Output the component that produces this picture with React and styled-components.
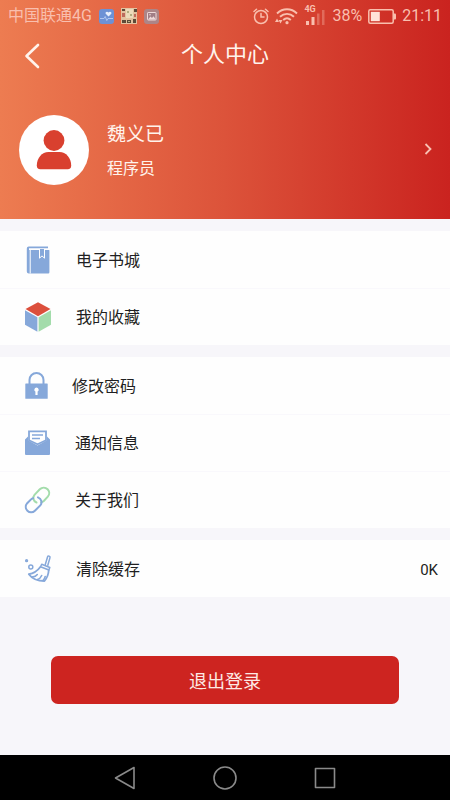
import React from "react";
import styled, { createGlobalStyle } from "styled-components";

const GlobalStyle = createGlobalStyle`
  *, *::before, *::after { box-sizing: border-box; }
  body {
    margin: 0;
    background: #f7f6fa;
    font-family: Roboto, "Noto Sans CJK SC", sans-serif;
    color: #1f1f22;
  }
  button { font: inherit; color: inherit; border: 0; background: none; padding: 0; cursor: pointer; }
  svg { display: block; flex: none; }
`;

const Page = styled.div`
  min-height: 100vh;
  display: flex;
  flex-direction: column;
`;

const Hero = styled.header`
  background: linear-gradient(90deg, #ed7c51 0%, #dc533a 50%, #ca231f 100%);
  color: #fff3ec;
  padding-bottom: 37px;
  display: flex;
  flex-direction: column;
`;

const StatusBar = styled.div`
  height: 32px;
  padding: 0 8px;
  display: flex;
  align-items: center;
  justify-content: space-between;
  font-size: 16px;
  line-height: 24px;
  color: #f9bfae;
`;

const StatusGroup = styled.div`
  display: flex;
  align-items: center;
  gap: ${(p) => p.$gap}px;
`;

const TitleBar = styled.div`
  height: 48px;
  padding: 0 20px;
  display: grid;
  grid-template-columns: 24px 1fr 24px;
  align-items: center;
`;

const Title = styled.h1`
  margin: 0;
  font-size: 22px;
  line-height: 32px;
  padding-bottom: 2px;
  font-weight: 400;
  text-align: center;
`;

const BackButton = styled.button`
  display: grid;
  place-items: center;
  height: 32px;
`;

const Profile = styled.button`
  display: flex;
  align-items: center;
  gap: 18px;
  margin-top: 35px;
  padding: 0 18px 0 19px;
  text-align: left;
`;

const Avatar = styled.span`
  width: 70px;
  height: 70px;
  margin-bottom: -3px;
  border-radius: 50%;
  background: #fff;
  display: grid;
  place-items: center;
`;

const ProfileText = styled.span`
  flex: 1;
  display: flex;
  flex-direction: column;
  gap: 8px;
  padding-top: 4px;
`;

const Name = styled.span`
  font-size: 19px;
  line-height: 28px;
`;

const Job = styled.span`
  font-size: 16px;
  line-height: 24px;
`;

const Main = styled.main`
  flex: 1;
  display: flex;
  flex-direction: column;
  gap: 12px;
  padding: 12px 0 48px;
`;

const MenuGroup = styled.section`
  background: #fefefe;
`;

const MenuRow = styled.button`
  width: 100%;
  height: 57px;
  padding: 0 12px 0 24px;
  display: flex;
  align-items: center;
  gap: 24px;
  font-size: 16px;
  line-height: 24px;
  text-align: left;

  & + & { border-top: 1px solid #f9f8fc; }
`;

const RowLabel = styled.span`
  flex: 1;
  padding-top: 2px;
`;

const RowValue = styled.span`
  font-size: 15px;
  padding-top: 2px;
`;

const LogoutButton = styled.button`
  margin: 47px 51px 0;
  height: 48px;
  padding-top: 3px;
  border-radius: 7px;
  background: #cd2420;
  color: #fde9e4;
  font-size: 18px;
  line-height: 24px;
`;

const NavBar = styled.nav`
  height: 45px;
  background: #000;
  display: flex;
  justify-content: center;
  gap: 76px;
`;

const NavButton = styled.button`
  width: 24px;
  display: grid;
  place-items: center;
`;

const BLUE = "#86a8da";
const GREEN = "#a3dcab";

const BookIcon = () => (
  <svg width="28" height="30" viewBox="0 0 28 30" aria-hidden="true">
    <path d="M4.800 1.500H24v1.800H5v1.600h20a.4.4 0 0 1 .4.4v22a1.200 1.200 0 0 1-1.200 1.200H4.800A2 2 0 0 1 2.800 26.500V3.500a2 2 0 0 1 2-2z" fill={BLUE} />
    <path d="M5.700 5h1v23.500h-1z" fill="#fff" />
    <path d="M15.500 4v9.200l2.500-2.300 2.500 2.300V4" fill={BLUE} stroke="#fff" strokeWidth="1" />
  </svg>
);

const CubeIcon = () => (
  <svg width="28" height="30" viewBox="0 0 28 30" aria-hidden="true">
    <path d="M14 .3 26.500 7 14 14.200 1.500 7z" fill="#dc4f3c" />
    <path d="M1 8.200 13.400 15.300v14.400L1 22.800z" fill={BLUE} />
    <path d="M27 8.200 14.600 15.300v14.400L27 22.800z" fill={GREEN} />
  </svg>
);

const LockIcon = () => (
  <svg width="24" height="30" viewBox="0 0 24 30" aria-hidden="true">
    <path d="M5.500 13V9a7 7 0 0 1 14 0v4" fill="none" stroke={BLUE} strokeWidth="2" />
    <rect x="1.300" y="12.500" width="22.400" height="15.300" rx=".6" fill={BLUE} />
    <path d="M12.500 16.500a2.200 2.200 0 0 1 1.100 4.100v3.400h-2.200v-3.400a2.200 2.200 0 0 1 1.100-4.100z" fill="#fff" />
  </svg>
);

const MailIcon = () => (
  <svg width="27" height="30" viewBox="0 0 27 30" aria-hidden="true">
    <path d="M1 11.500 4 8.500v3.800l9.500 5.200L23 12.300V8.500l3 3V26a1 1 0 0 1-1 1H2a1 1 0 0 1-1-1z" fill={BLUE} />
    <path d="M5 3.300h17v9l-8.500 4L5 12.300z" fill="#fff" stroke={BLUE} strokeWidth="1.800" />
    <path d="M8 7h11M8 10.500h8" stroke={BLUE} strokeWidth="1.600" />
  </svg>
);

const LinkIcon = () => (
  <svg width="27" height="30" viewBox="0 0 27 30" fill="none" strokeWidth="2" strokeLinecap="round" aria-hidden="true">
    <path d="M12.500 17.500C9 16 8.300 12.500 10.500 9.800l5.300-5.500c2.400-2.400 5.800-2 7.800 0s2.200 5.100.2 7.400l-4 4.300c-.8.800-1.700 1.200-2.700 1.200" stroke={GREEN} />
    <path d="M14 12.400c3.600 1.500 4.600 5.300 2.300 8l-5.400 5.300c-2.200 2.200-5.500 2-7.500 0s-2.200-5.100-.2-7.500L7 14.400c.7-.8 1.500-1.100 2.300-1.200" stroke={BLUE} />
  </svg>
);

const BroomIcon = () => (
  <svg width="28" height="30" viewBox="0 0 28 30" fill="none" stroke={BLUE} strokeWidth="1.500" strokeLinecap="round" strokeLinejoin="round" aria-hidden="true">
    <path d="m21.300 10.500 2.300-7.700c.4-1.300 2.800-.7 2.400.8l-2.200 7.700" />
    <path d="M17.700 10.300 25.800 13.500l-.9 2.500-8.400-3.200z" />
    <path d="M16.300 13C13 17.500 9.500 19.500 4.800 20.200 8 24.500 13 27 20.500 27c2.500-3 4-6.500 4.200-10.700" strokeWidth="1.800" />
    <path d="M8.500 22.800c2 .2 3.500-.7 4.800-2.300M13.500 25.500c2-.5 3.200-1.800 4.200-4M19 26.500c1.200-1 1.800-2.200 2.200-4" strokeWidth="1.600" />
    <circle cx="6.800" cy="13" r="2" />
    <circle cx="2.600" cy="6.700" r=".9" />
  </svg>
);

const PersonIcon = () => (
  <svg width="36" height="40" viewBox="0 0 36 40" fill="#d9402f" aria-hidden="true">
    <circle cx="18" cy="10.500" r="10.400" />
    <path d="M.8 35.500C.8 28 6 22 12.500 21.900h11C30 22 35.200 28 35.200 35.500c0 2.500-1.200 3.700-3.500 3.700H4.300C2 39.200.8 38 .8 35.500z" />
  </svg>
);

const HealthBadge = () => (
  <svg width="15" height="15" viewBox="0 0 15 15" aria-hidden="true">
    <rect width="15" height="15" rx="3" fill="#6d91d5" />
    <path d="M9.500 7.500 6.700 4.800c-1-1.600 1.400-3.100 2.800-1.400 1.400-1.700 3.800-.2 2.800 1.400z" fill="#e9effc" />
    <path d="M1 9.500h4l1.200-2 1.600 4 1.200-2h5" fill="none" stroke="#b7cbf3" strokeWidth=".9" />
  </svg>
);

const GameBadge = () => (
  <svg width="16" height="16" viewBox="0 0 16 16" aria-hidden="true">
    <rect width="16" height="16" fill="#e3c3a0" />
    <path d="M1 1h3v2H1zM13 1h3v3h-3zM1 12h4v3H1zM6 12h4v3H6zM12 11h3v4h-3z" fill="#5d4a38" />
    <path d="M1 5h3v4H1zM13 6h2v3h-2z" fill="#bd6b5c" />
    <path d="M5 1h7v9H5z" fill="#ecdcbc" />
    <path d="M6 3h2v2H6zM9 6h2v2H9zM7 13h2v1H7z" fill="#b3ad80" />
  </svg>
);

const PhotoBadge = () => (
  <svg width="15" height="15" viewBox="0 0 15 15" aria-hidden="true">
    <rect width="15" height="15" rx="3" fill="#ad8587" />
    <rect x="3.500" y="3.500" width="8.500" height="7.500" rx=".6" fill="#a17e86" stroke="#efd9d9" />
    <path d="m4 10.500 2.500-3 1.500 1.500 1.500-1.700 2.300 3.200z" fill="#efd9d9" />
    <circle cx="6" cy="5.800" r=".8" fill="#efd9d9" />
  </svg>
);

const AlarmIcon = () => (
  <svg width="16" height="17" viewBox="0 0 16 17" fill="none" stroke="currentColor" strokeWidth="1.500" strokeLinecap="round" aria-hidden="true">
    <circle cx="8" cy="9" r="6.500" />
    <path d="M8 5.500V9h3M1 3.500 3.500 1.300M15 3.500 12.500 1.300" />
  </svg>
);

const WifiIcon = () => (
  <svg width="23" height="18" viewBox="0 0 23 18" fill="none" stroke="currentColor" aria-hidden="true">
    <path d="M2 6.500c5.800-5.600 14.200-5.600 20 0M5 9.800c4.100-3.900 9.900-3.900 14 0M8.200 13c2.300-2.200 5.300-2.200 7.600 0" strokeWidth="1.900" />
    <circle cx="12" cy="15.700" r="1.600" fill="currentColor" stroke="none" />
    <path d="M0 15 2 11.500 4 15zM3.500 13 5.500 16.500 7.500 13z" fill="currentColor" stroke="none" />
  </svg>
);

const SignalBox = styled.span`
  display: flex;
  flex-direction: column;
  width: 22px;
  height: 22px;
  font-size: 9px;
  line-height: 8px;
  font-weight: 700;
  position: relative;
`;

const SignalBars = styled.svg`
  position: absolute;
  left: 2px;
  bottom: 2px;
`;

const Signal = () => (
  <SignalBox>
    4G
    <SignalBars width="20" height="16" viewBox="0 0 20 16" fill="currentColor" aria-hidden="true">
      <path d="M0 12h3v4H0zM5.500 8h3v8h-3z" />
      <path d="M11 4.500h2.500V16H11zM16 1h2.500v15H16z" opacity=".35" />
    </SignalBars>
  </SignalBox>
);

const BatteryIcon = () => (
  <svg width="28" height="15" viewBox="0 0 28 15" aria-hidden="true">
    <rect x=".8" y=".8" width="24.400" height="13.400" rx="1.500" fill="none" stroke="currentColor" strokeWidth="1.500" />
    <path d="M25.500 4.500H27a1 1 0 0 1 1 1v4a1 1 0 0 1-1 1h-1.500z" fill="currentColor" />
    <rect x="2.800" y="2.800" width="9" height="9.400" fill="#ffe3d9" />
  </svg>
);

const groups = [
  [
    { label: "电子书城", Icon: BookIcon },
    { label: "我的收藏", Icon: CubeIcon },
  ],
  [
    { label: "修改密码", Icon: LockIcon },
    { label: "通知信息", Icon: MailIcon },
    { label: "关于我们", Icon: LinkIcon },
  ],
  [{ label: "清除缓存", Icon: BroomIcon, value: "0K" }],
];

export default function App() {
  return (
    <Page>
      <GlobalStyle />
      <Hero>
        <StatusBar>
          <StatusGroup $gap={7}>
            <span>中国联通4G</span>
            <HealthBadge />
            <GameBadge />
            <PhotoBadge />
          </StatusGroup>
          <StatusGroup $gap={6}>
            <AlarmIcon />
            <WifiIcon />
            <Signal />
            <span>38%</span>
            <BatteryIcon />
            <span>21:11</span>
          </StatusGroup>
        </StatusBar>
        <TitleBar>
          <BackButton aria-label="返回">
            <svg width="16" height="26" viewBox="0 0 16 26" fill="none" stroke="currentColor" strokeWidth="2.600" strokeLinecap="round" strokeLinejoin="round" aria-hidden="true">
              <path d="M14 2 2.500 13 14 24" />
            </svg>
          </BackButton>
          <Title>个人中心</Title>
        </TitleBar>
        <Profile>
          <Avatar>
            <PersonIcon />
          </Avatar>
          <ProfileText>
            <Name>魏义已</Name>
            <Job>程序员</Job>
          </ProfileText>
          <svg width="8" height="12" viewBox="0 0 8 12" fill="none" stroke="#f8c1b3" strokeWidth="1.800" aria-hidden="true">
            <path d="m1.500 1 5 5-5 5" />
          </svg>
        </Profile>
      </Hero>
      <Main>
        {groups.map((rows) => (
          <MenuGroup key={rows[0].label}>
            {rows.map(({ label, Icon, value }) => (
              <MenuRow key={label}>
                <Icon />
                <RowLabel>{label}</RowLabel>
                {value && <RowValue>{value}</RowValue>}
              </MenuRow>
            ))}
          </MenuGroup>
        ))}
        <LogoutButton>退出登录</LogoutButton>
      </Main>
      <NavBar>
        <NavButton aria-label="后退">
          <svg width="22" height="24" viewBox="0 0 22 24" fill="none" stroke="#8a8a8a" strokeWidth="1.600" strokeLinejoin="round" aria-hidden="true">
            <path d="M20 1.500v21L1.500 12z" />
          </svg>
        </NavButton>
        <NavButton aria-label="主屏幕">
          <svg width="24" height="24" viewBox="0 0 24 24" fill="none" stroke="#8a8a8a" strokeWidth="1.600" aria-hidden="true">
            <circle cx="12" cy="12" r="11" />
          </svg>
        </NavButton>
        <NavButton aria-label="最近任务">
          <svg width="22" height="22" viewBox="0 0 22 22" fill="none" stroke="#8a8a8a" strokeWidth="1.600" strokeLinejoin="round" aria-hidden="true">
            <rect x="1.500" y="1.500" width="19" height="19" />
          </svg>
        </NavButton>
      </NavBar>
    </Page>
  );
}
